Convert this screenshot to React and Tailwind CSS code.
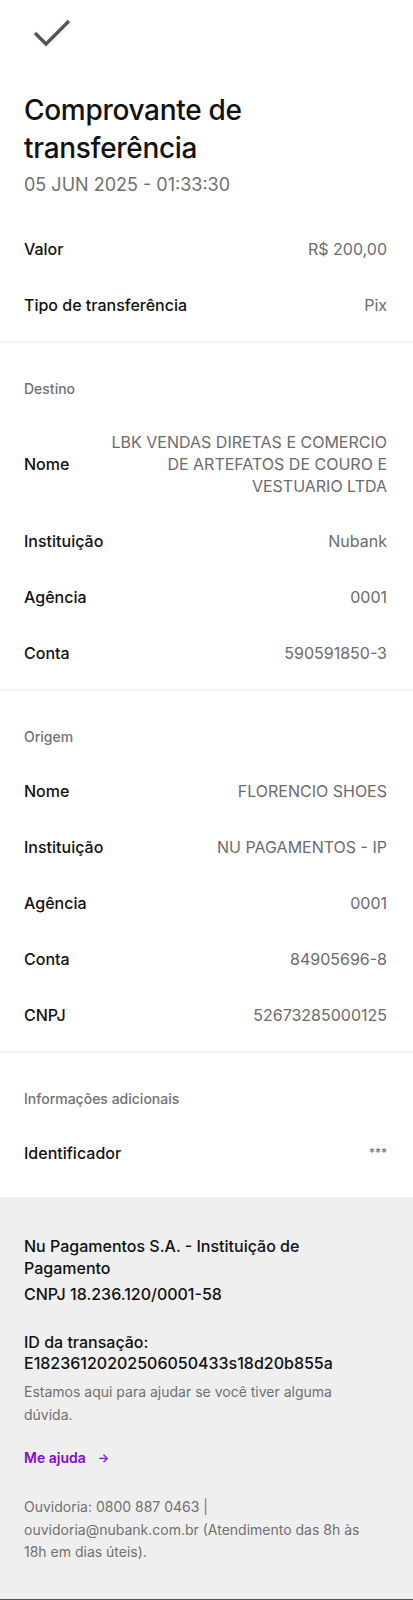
function Row({ label, children, small }) {
  return (
    <div className="flex items-center justify-between gap-4 py-4">
      <span className="text-[16px] leading-6 font-medium text-[#111]">{label}</span>
      <span
        className={
          small
            ? "text-right text-[12px] leading-[22px] text-[#6b6b6b]"
            : "max-w-[280px] text-right text-[16px] leading-[22px] text-[#6b6b6b]"
        }
      >
        {children}
      </span>
    </div>
  )
}

function SectionTitle({ children }) {
  return (
    <div className="pt-9 pb-4 text-[14px] leading-5 font-medium text-[#707070]">{children}</div>
  )
}

function Divider() {
  return <div className="mt-2 h-[2px] bg-[#f4f4f4]"></div>
}

export default function App() {
  return (
    <div className="min-h-[1600px] bg-white flex flex-col font-['Inter',sans-serif]">
      <div className="pl-6 pr-[26px]">
        <div className="pt-[19px]">
          <svg width="40" height="30" viewBox="0 0 40 30" className="ml-[8px]">
            <polyline points="3,14 14,25 37,2" fill="none" stroke="#555" strokeWidth="3.4" />
          </svg>
        </div>

        <h1 className="mt-[42px] text-[28px] leading-[38px] font-medium tracking-[-0.3px] text-[#111] w-[260px]">
          Comprovante de transferência
        </h1>
        <p className="mt-[6px] text-[18px] leading-6 text-[#707070]">05 JUN 2025 - 01:33:30</p>

        <div className="mt-6">
          <Row label="Valor">R$ 200,00</Row>
          <Row label="Tipo de transferência">Pix</Row>
        </div>
      </div>
      <Divider />

      <div className="pl-6 pr-[26px]">
        <SectionTitle>Destino</SectionTitle>
        <Row label="Nome">LBK VENDAS DIRETAS E COMERCIO DE ARTEFATOS DE COURO E VESTUARIO LTDA</Row>
        <Row label="Instituição">Nubank</Row>
        <Row label="Agência">0001</Row>
        <Row label="Conta">590591850-3</Row>
      </div>
      <Divider />

      <div className="pl-6 pr-[26px]">
        <SectionTitle>Origem</SectionTitle>
        <Row label="Nome">FLORENCIO SHOES</Row>
        <Row label="Instituição">NU PAGAMENTOS - IP</Row>
        <Row label="Agência">0001</Row>
        <Row label="Conta">84905696-8</Row>
        <Row label="CNPJ">52673285000125</Row>
      </div>
      <Divider />

      <div className="pl-6 pr-[26px] pb-4">
        <SectionTitle>Informações adicionais</SectionTitle>
        <Row label="Identificador" small>***</Row>
      </div>

      <div className="flex-1 bg-[#efefef] px-6 pt-[38px] pb-8 border-b border-[#555]">
        <div className="max-w-[345px]">
          <p className="text-[16px] leading-[22px] font-medium text-[#111]">
            Nu Pagamentos S.A. - Instituição de Pagamento
          </p>
          <p className="mt-1 text-[16px] leading-[22px] font-medium text-[#111]">CNPJ 18.236.120/0001-58</p>

          <p className="mt-[27px] text-[16px] leading-[21px] font-medium text-[#111]">
            ID da transação:
            <br />
            E18236120202506050433s18d20b855a
          </p>
          <p className="mt-[6px] text-[14px] leading-[23px] text-[#707070]">
            Estamos aqui para ajudar se você tiver alguma dúvida.
          </p>

          <div className="mt-[22px] flex items-center gap-3 text-[14px] leading-5 font-semibold text-[#820ad1]">
            <span>Me ajuda</span>
            <span className="text-[12px]">→</span>
          </div>

          <p className="mt-[28px] text-[14px] leading-[22.5px] text-[#707070]">
            Ouvidoria: 0800 887 0463 | ouvidoria@nubank.com.br (Atendimento das 8h às 18h em dias úteis).
          </p>
        </div>
      </div>
    </div>
  )
}
